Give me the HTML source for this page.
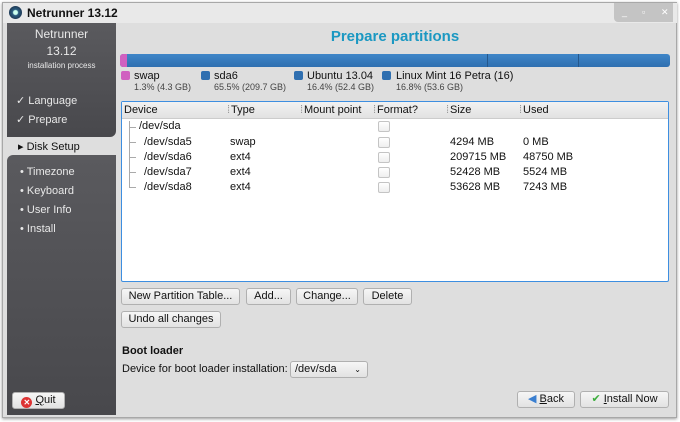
<!DOCTYPE html>
<html><head><style>
*{margin:0;padding:0;box-sizing:border-box}
body{width:680px;height:422px;background:#fff;font-family:"Liberation Sans",sans-serif;font-size:11px;color:#111;position:relative;overflow:hidden}
.a{position:absolute;white-space:nowrap}
.win{position:absolute;left:2px;top:2px;width:675px;height:416px;background:#dedede;border:1px solid #a8a8a8;box-shadow:0 1px 3px #999}
.sb{background:linear-gradient(#5a5a5e,#48484c);border-radius:0 0 6px 0}
.btn{position:absolute;height:17px;border:1px solid #b0b0b0;border-radius:3px;background:linear-gradient(#f6f6f6,#e2e2e2);text-align:center;line-height:15px;font-size:11px}
.tl{color:#e8e8e8;font-size:11px}
.cb{position:absolute;left:378px;width:12px;height:11px;border:1px solid #c4c4c4;border-radius:2px;background:linear-gradient(#fff,#eee)}
.sq{position:absolute;width:9px;height:9px;border-radius:2px}
.sm{font-size:9px;color:#444}
</style></head><body>
<div class="win"></div>
<div class="a" style="left:3px;top:3px;width:674px;height:20px;background:#e9e9e9"></div>
<div class="a" style="left:9px;top:6px;width:13px;height:13px;border-radius:50%;background:radial-gradient(circle,#cfe 0 2px,#2a5c80 3px,#1d3550 7px)"></div>
<div class="a" style="left:27px;top:6px;font-weight:bold;font-size:12px">Netrunner 13.12</div>
<div class="a" style="left:614px;top:3px;width:59px;height:19px;background:#c4c4c4;border-radius:0 0 0 4px;color:#fff;font-size:9px;line-height:19px;letter-spacing:0"><span style="position:absolute;left:8px">_</span><span style="position:absolute;left:28px">▫</span><span style="position:absolute;left:47px">✕</span></div>
<div class="a sb" style="left:7px;top:23px;width:109px;height:114px"></div>
<div class="a" style="left:7px;top:137px;width:109px;height:18px;background:#dedede"></div>
<div class="a sb" style="left:7px;top:155px;width:109px;height:260px;border-radius:6px 0 0 0"></div>
<div class="a tl" style="left:7px;top:27px;width:109px;text-align:center;font-size:12px">Netrunner</div>
<div class="a tl" style="left:7px;top:44px;width:109px;text-align:center;font-size:12px">13.12</div>
<div class="a tl" style="left:7px;top:61px;width:109px;text-align:center;font-size:8px">installation process</div>
<div class="a tl" style="left:16px;top:94px">✓ Language</div>
<div class="a tl" style="left:16px;top:113px">✓ Prepare</div>
<div class="a" style="left:18px;top:140px">▸ Disk Setup</div>
<div class="a tl" style="left:20px;top:166px">• Timezone</div>
<div class="a tl" style="left:20px;top:185px">• Keyboard</div>
<div class="a tl" style="left:20px;top:204px">• User Info</div>
<div class="a tl" style="left:20px;top:223px">• Install</div>
<div class="btn" style="left:12px;top:392px;width:53px"><span style="display:inline-block;width:11px;height:11px;border-radius:50%;background:#d33;color:#fff;font-size:8px;line-height:11px;vertical-align:-2px;font-weight:bold">✕</span> <u>Q</u>uit</div>

<div class="a" style="left:120px;top:28px;width:550px;text-align:center;color:#1b98c2;font-weight:bold;font-size:15px">Prepare partitions</div>
<div class="a" style="left:120px;top:54px;width:550px;height:13px;border-radius:3px;background:linear-gradient(#3f86c8,#2f6fb0);overflow:hidden">
<div class="a" style="left:0;top:0;width:7px;height:13px;background:#d060c0"></div>
<div class="a" style="left:367px;top:0;width:1px;height:13px;background:#25588c"></div>
<div class="a" style="left:458px;top:0;width:1px;height:13px;background:#25588c"></div>
</div>
<div class="sq" style="left:121px;top:71px;background:#d060c0"></div><div class="a" style="left:134px;top:70px">swap</div><div class="a sm" style="left:134px;top:82px">1.3% (4.3 GB)</div>
<div class="sq" style="left:201px;top:71px;background:#2f6fb0"></div><div class="a" style="left:214px;top:70px">sda6</div><div class="a sm" style="left:214px;top:82px">65.5% (209.7 GB)</div>
<div class="sq" style="left:294px;top:71px;background:#2f6fb0"></div><div class="a" style="left:307px;top:70px">Ubuntu 13.04</div><div class="a sm" style="left:307px;top:82px">16.4% (52.4 GB)</div>
<div class="sq" style="left:382px;top:71px;background:#2f6fb0"></div><div class="a" style="left:396px;top:70px">Linux Mint 16 Petra (16)</div><div class="a sm" style="left:396px;top:82px">16.8% (53.6 GB)</div>

<div class="a" style="left:121px;top:101px;width:548px;height:181px;border:1px solid #3d8ee0;border-radius:2px;background:#fff"></div>
<div class="a" style="left:122px;top:102px;width:546px;height:17px;background:linear-gradient(#f2f2f2,#e2e2e2);border-bottom:1px solid #ccc"></div>
<div class="a" style="left:124px;top:104px;font-size:11px">Device</div>
<div class="a" style="left:227px;top:104px;color:#999">⁞</div><div class="a" style="left:231px;top:104px">Type</div>
<div class="a" style="left:300px;top:104px;color:#999">⁞</div><div class="a" style="left:304px;top:104px">Mount point</div>
<div class="a" style="left:373px;top:104px;color:#999">⁞</div><div class="a" style="left:377px;top:104px">Format?</div>
<div class="a" style="left:446px;top:104px;color:#999">⁞</div><div class="a" style="left:450px;top:104px">Size</div>
<div class="a" style="left:519px;top:104px;color:#999">⁞</div><div class="a" style="left:523px;top:104px">Used</div>
<div class="a" style="left:129px;top:121px;width:1px;height:67px;background:#aaa"></div>
<div class="a" style="left:129px;top:127px;width:7px;height:1px;background:#aaa"></div>
<div class="a" style="left:129px;top:142px;width:7px;height:1px;background:#aaa"></div>
<div class="a" style="left:129px;top:157px;width:7px;height:1px;background:#aaa"></div>
<div class="a" style="left:129px;top:172px;width:7px;height:1px;background:#aaa"></div>
<div class="a" style="left:129px;top:187px;width:7px;height:1px;background:#aaa"></div>
<div class="a" style="left:139px;top:120px">/dev/sda</div><div class="cb" style="top:121px"></div>
<div class="a" style="left:144px;top:136px">/dev/sda5</div><div class="a" style="left:230px;top:136px">swap</div><div class="cb" style="top:137px"></div><div class="a" style="left:450px;top:136px">4294 MB</div><div class="a" style="left:523px;top:136px">0 MB</div>
<div class="a" style="left:144px;top:151px">/dev/sda6</div><div class="a" style="left:230px;top:151px">ext4</div><div class="cb" style="top:152px"></div><div class="a" style="left:450px;top:151px">209715 MB</div><div class="a" style="left:523px;top:151px">48750 MB</div>
<div class="a" style="left:144px;top:166px">/dev/sda7</div><div class="a" style="left:230px;top:166px">ext4</div><div class="cb" style="top:167px"></div><div class="a" style="left:450px;top:166px">52428 MB</div><div class="a" style="left:523px;top:166px">5524 MB</div>
<div class="a" style="left:144px;top:181px">/dev/sda8</div><div class="a" style="left:230px;top:181px">ext4</div><div class="cb" style="top:182px"></div><div class="a" style="left:450px;top:181px">53628 MB</div><div class="a" style="left:523px;top:181px">7243 MB</div>

<div class="btn" style="left:121px;top:288px;width:119px">New Partition Table...</div>
<div class="btn" style="left:246px;top:288px;width:45px">Add...</div>
<div class="btn" style="left:296px;top:288px;width:62px">Change...</div>
<div class="btn" style="left:363px;top:288px;width:49px">Delete</div>
<div class="btn" style="left:121px;top:311px;width:100px">Undo all changes</div>
<div class="a" style="left:122px;top:345px;font-weight:bold">Boot loader</div>
<div class="a" style="left:122px;top:363px">Device for boot loader installation:</div>
<div class="btn" style="left:290px;top:361px;width:78px;text-align:left;padding-left:4px">/dev/sda<span style="position:absolute;right:6px;font-size:8px">⌄</span></div>
<div class="btn" style="left:517px;top:391px;width:58px"><span style="color:#3a7fd0">◀</span> <u>B</u>ack</div>
<div class="btn" style="left:580px;top:391px;width:89px"><span style="color:#3cae3c">✔</span> <u>I</u>nstall Now</div>
</body></html>
